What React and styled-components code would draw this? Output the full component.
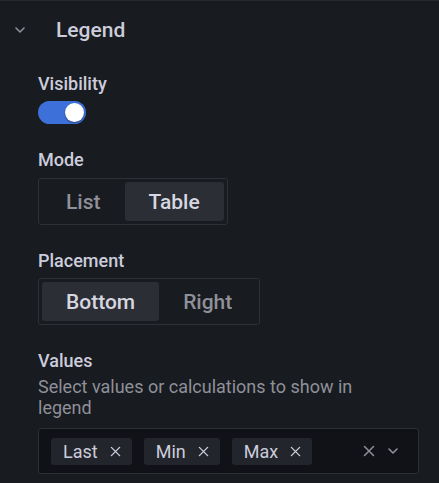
import React, { useState } from "react";
import styled, { createGlobalStyle } from "styled-components";

const GlobalStyle = createGlobalStyle`
  body {
    margin: 0;
    background: #181b1f;
    font-family: Roboto, "Liberation Sans", sans-serif;
    color: #ccccdc;
  }
`;

const Panel = styled.section`
  width: 439px;
  min-height: 483px;
  box-sizing: border-box;
  border-top: 1px solid #25282d;
  background: #181b1f;
`;

const Header = styled.div`
  display: flex;
  align-items: center;
  height: 57px;
  padding-left: 15px;
`;

const Title = styled.h2`
  margin: 0 0 0 31px;
  font-size: 21px;
  line-height: 26px;
  font-weight: 500;
  color: #ccccdc;
`;

const Body = styled.div`
  display: flex;
  flex-direction: column;
  gap: 25px;
  padding: 15px 20px 0 38px;
`;

const Field = styled.div`
  display: flex;
  flex-direction: column;
  align-items: flex-start;
`;

const LabelBlock = styled.div`
  margin-bottom: ${(p) => p.$gap || "6px"};
`;

const Label = styled.div`
  font-size: 18px;
  line-height: 22px;
  font-weight: 500;
  color: #ccccdc;
`;

const Description = styled.div`
  margin: 4px 0;
  font-size: 18px;
  line-height: 21px;
  color: #8f909a;
  max-width: 340px;
`;

const Switch = styled.button`
  position: relative;
  width: 48px;
  height: 23px;
  padding: 0;
  border: none;
  border-radius: 12px;
  background: ${(p) => (p.$on ? "#3d71d9" : "#2c3036")};
  cursor: pointer;
`;

const Knob = styled.span`
  position: absolute;
  top: 2px;
  left: ${(p) => (p.$on ? "27px" : "2px")};
  width: 19px;
  height: 19px;
  border-radius: 50%;
  background: #fff;
  box-shadow: 0 1px 2px rgba(0, 0, 0, 0.4);
`;

const RadioGroup = styled.div`
  display: flex;
  padding: 3px;
  border: 1px solid #2d3035;
  border-radius: 3px;
`;

const RadioButton = styled.button`
  height: 39px;
  padding: 0 24px;
  border: none;
  border-radius: 3px;
  background: ${(p) => (p.$active ? "#2b2e34" : "transparent")};
  color: ${(p) => (p.$active ? "#d6d7e0" : "#8f909a")};
  font-family: inherit;
  font-size: 21px;
  font-weight: 500;
  cursor: pointer;
`;

const MultiSelect = styled.div`
  display: flex;
  align-items: center;
  align-self: stretch;
  min-height: 44px;
  padding: 0 20px 0 12px;
  border: 1px solid #2d3035;
  border-radius: 3px;
  background: #111217;
`;

const Chips = styled.div`
  display: flex;
  flex: 1;
  gap: 12px;
`;

const Chip = styled.span`
  display: flex;
  align-items: center;
  gap: 12px;
  height: 27px;
  padding: 0 11px 0 12px;
  border-radius: 3px;
  background: #22252b;
  font-size: 18px;
  color: #ccccdc;
`;

const Indicators = styled.div`
  display: flex;
  align-items: center;
  gap: 13px;
  color: #8f909a;
`;

const ClearButton = styled.span`
  display: flex;
  cursor: pointer;
`;

const HeaderChevron = styled.span`
  display: flex;
  color: #8f909a;
`;

const Chevron = ({ size = 10 }) => (
  <svg width={size} height={size / 2 + 1} viewBox="0 0 10 6" fill="none">
    <polyline
      points="1,1 5,5 9,1"
      stroke="currentColor"
      strokeWidth="1.6"
      strokeLinecap="round"
      strokeLinejoin="round"
    />
  </svg>
);

const Cross = ({ size = 11 }) => (
  <svg width={size} height={size} viewBox="0 0 12 12" fill="none">
    <path
      d="M1.5 1.5 L10.5 10.5 M10.5 1.5 L1.5 10.5"
      stroke="currentColor"
      strokeWidth="1.5"
      strokeLinecap="round"
    />
  </svg>
);

export default function App() {
  const [visible, setVisible] = useState(true);
  const [mode, setMode] = useState("Table");
  const [placement, setPlacement] = useState("Bottom");
  const [values, setValues] = useState(["Last", "Min", "Max"]);

  return (
    <>
      <GlobalStyle />
      <Panel>
        <Header>
          <HeaderChevron>
            <Chevron />
          </HeaderChevron>
          <Title>Legend</Title>
        </Header>
        <Body>
          <Field>
            <LabelBlock>
              <Label>Visibility</Label>
            </LabelBlock>
            <Switch $on={visible} onClick={() => setVisible(!visible)}>
              <Knob $on={visible} />
            </Switch>
          </Field>

          <Field>
            <LabelBlock $gap="7px">
              <Label>Mode</Label>
            </LabelBlock>
            <RadioGroup>
              {["List", "Table"].map((m) => (
                <RadioButton key={m} $active={mode === m} onClick={() => setMode(m)}>
                  {m}
                </RadioButton>
              ))}
            </RadioGroup>
          </Field>

          <Field>
            <LabelBlock>
              <Label>Placement</Label>
            </LabelBlock>
            <RadioGroup>
              {["Bottom", "Right"].map((p) => (
                <RadioButton
                  key={p}
                  $active={placement === p}
                  onClick={() => setPlacement(p)}
                >
                  {p}
                </RadioButton>
              ))}
            </RadioGroup>
          </Field>

          <Field>
            <LabelBlock>
              <Label>Values</Label>
              <Description>Select values or calculations to show in legend</Description>
            </LabelBlock>
            <MultiSelect>
              <Chips>
                {values.map((v) => (
                  <Chip key={v}>
                    {v}
                    <Cross />
                  </Chip>
                ))}
              </Chips>
              <Indicators>
                <ClearButton onClick={() => setValues([])}>
                  <Cross size={12} />
                </ClearButton>
                <Chevron />
              </Indicators>
            </MultiSelect>
          </Field>
        </Body>
      </Panel>
    </>
  );
}
